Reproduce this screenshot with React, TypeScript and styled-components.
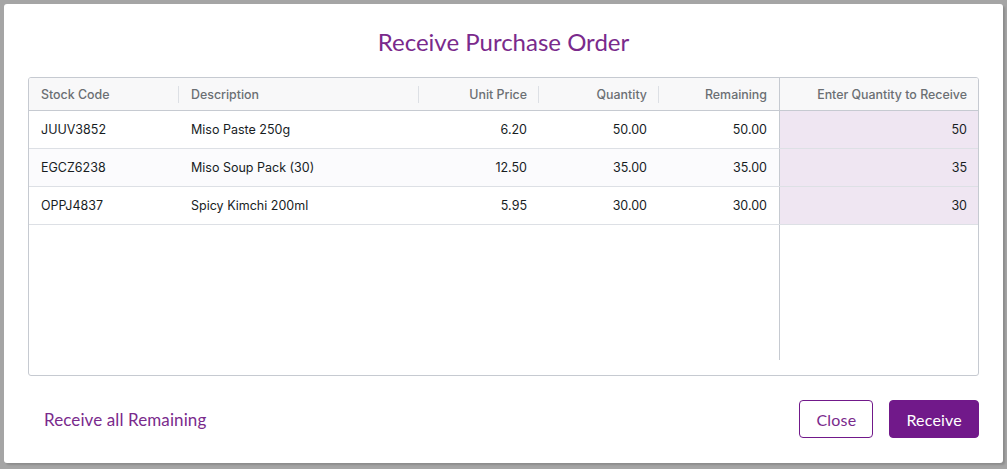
import React from "react";
import styled, { createGlobalStyle } from "styled-components";

const Global = createGlobalStyle`
  html, body { margin: 0; padding: 0; }
  body {
    background: #a5a5a5;
    width: 1007px;
    height: 469px;
    overflow: hidden;
  }
  #root { padding: 4px 0 0 4px; }
`;

const Dialog = styled.div`
  width: 999px;
  height: 459px;
  background: #ffffff;
  border-radius: 3px;
  box-sizing: border-box;
  padding: 0 24px 24px;
  display: flex;
  flex-direction: column;
  box-shadow: 2px 2px 2px rgba(0, 0, 0, 0.15);
`;

const Title = styled.h2`
  margin: 0;
  height: 73px;
  box-sizing: border-box;
  padding-top: 24px;
  text-align: center;
  font-family: Lato, "Liberation Sans", sans-serif;
  font-weight: 400;
  font-size: 24px;
  line-height: 28px;
  color: #7a2a8c;
`;

const Grid = styled.div`
  height: 299px;
  box-sizing: border-box;
  border: 1px solid #c6cad1;
  border-radius: 3px;
  overflow: hidden;
  display: flex;
  flex-direction: column;
  font-family: Inter, "Liberation Sans", sans-serif;
  font-size: 13px;
  color: #181d1f;
`;

const cols = "150px 240px 120px 120px 120px 1fr";

const HeaderRow = styled.div`
  display: grid;
  grid-template-columns: ${cols};
  height: 33px;
  box-sizing: border-box;
  background: #f8f8f9;
  border-bottom: 1px solid #c6cad1;
`;

const HeaderCell = styled.div<{ $right?: boolean; $pinned?: boolean; $sep?: boolean }>`
  position: relative;
  display: flex;
  align-items: center;
  justify-content: ${(p) => (p.$right ? "flex-end" : "flex-start")};
  padding: 0 ${(p) => (p.$pinned ? "11px" : "12px")} 0 12px;
  font-weight: 500;
  font-size: 12.4px;
  color: #6b6f73;
  border-left: ${(p) => (p.$pinned ? "1px solid #c6cad1" : "none")};
  &::after {
    content: "";
    display: ${(p) => (p.$sep ? "block" : "none")};
    position: absolute;
    right: 0;
    top: 8px;
    height: 17px;
    width: 1px;
    background: #dde0e5;
  }
`;

const Row = styled.div<{ $alt?: boolean }>`
  display: grid;
  grid-template-columns: ${cols};
  height: 38px;
  box-sizing: border-box;
  border-bottom: 1px solid #dde0e5;
  background: ${(p) => (p.$alt ? "#fbfbfd" : "#ffffff")};
`;

const Cell = styled.div<{ $right?: boolean; $pinned?: boolean }>`
  display: flex;
  align-items: center;
  justify-content: ${(p) => (p.$right ? "flex-end" : "flex-start")};
  padding: 0 ${(p) => (p.$pinned ? "11px" : "12px")} 0 12px;
  font-size: 12.5px;
  background: ${(p) => (p.$pinned ? "#efe6f2" : "transparent")};
  border-left: ${(p) => (p.$pinned ? "1px solid #c6cad1" : "none")};
`;

const Filler = styled.div`
  flex: 1;
  display: grid;
  grid-template-columns: ${cols};
`;

const FillerPinned = styled.div`
  grid-column: 6;
  border-left: 1px solid #c6cad1;
`;

const ScrollSpace = styled.div`
  height: 15px;
`;

const Footer = styled.div`
  margin-top: 24px;
  display: flex;
  align-items: center;
  justify-content: space-between;
  font-family: Lato, "Liberation Sans", sans-serif;
  font-size: 16px;
`;

const LinkButton = styled.button`
  background: none;
  border: none;
  padding: 0 16px;
  font: inherit;
  font-size: 17px;
  letter-spacing: 0.1px;
  color: #7a2a8c;
  cursor: pointer;
`;

const Actions = styled.div`
  display: flex;
  gap: 16px;
`;

const Button = styled.button<{ $primary?: boolean }>`
  height: 38px;
  box-sizing: border-box;
  padding: 0 16px;
  border-radius: 4px;
  font: inherit;
  letter-spacing: 0.2px;
  cursor: pointer;
  border: 1px solid #71198a;
  background: ${(p) => (p.$primary ? "#71198a" : "#ffffff")};
  color: ${(p) => (p.$primary ? "#ffffff" : "#7a2a8c")};
`;

const rows = [
  { code: "JUUV3852", desc: "Miso Paste 250g", price: "6.20", qty: "50.00", rem: "50.00", rec: "50" },
  { code: "EGCZ6238", desc: "Miso Soup Pack (30)", price: "12.50", qty: "35.00", rem: "35.00", rec: "35" },
  { code: "OPPJ4837", desc: "Spicy Kimchi 200ml", price: "5.95", qty: "30.00", rem: "30.00", rec: "30" },
];

export default function App() {
  return (
    <>
      <Global />
      <Dialog>
        <Title>Receive Purchase Order</Title>
        <Grid>
          <HeaderRow>
            <HeaderCell $sep>Stock Code</HeaderCell>
            <HeaderCell $sep>Description</HeaderCell>
            <HeaderCell $right $sep>Unit Price</HeaderCell>
            <HeaderCell $right $sep>Quantity</HeaderCell>
            <HeaderCell $right>Remaining</HeaderCell>
            <HeaderCell $right $pinned>Enter Quantity to Receive</HeaderCell>
          </HeaderRow>
          {rows.map((r, i) => (
            <Row key={r.code} $alt={i % 2 === 1}>
              <Cell>{r.code}</Cell>
              <Cell>{r.desc}</Cell>
              <Cell $right>{r.price}</Cell>
              <Cell $right>{r.qty}</Cell>
              <Cell $right>{r.rem}</Cell>
              <Cell $right $pinned>{r.rec}</Cell>
            </Row>
          ))}
          <Filler>
            <FillerPinned />
          </Filler>
          <ScrollSpace />
        </Grid>
        <Footer>
          <LinkButton>Receive all Remaining</LinkButton>
          <Actions>
            <Button>Close</Button>
            <Button $primary>Receive</Button>
          </Actions>
        </Footer>
      </Dialog>
    </>
  );
}
